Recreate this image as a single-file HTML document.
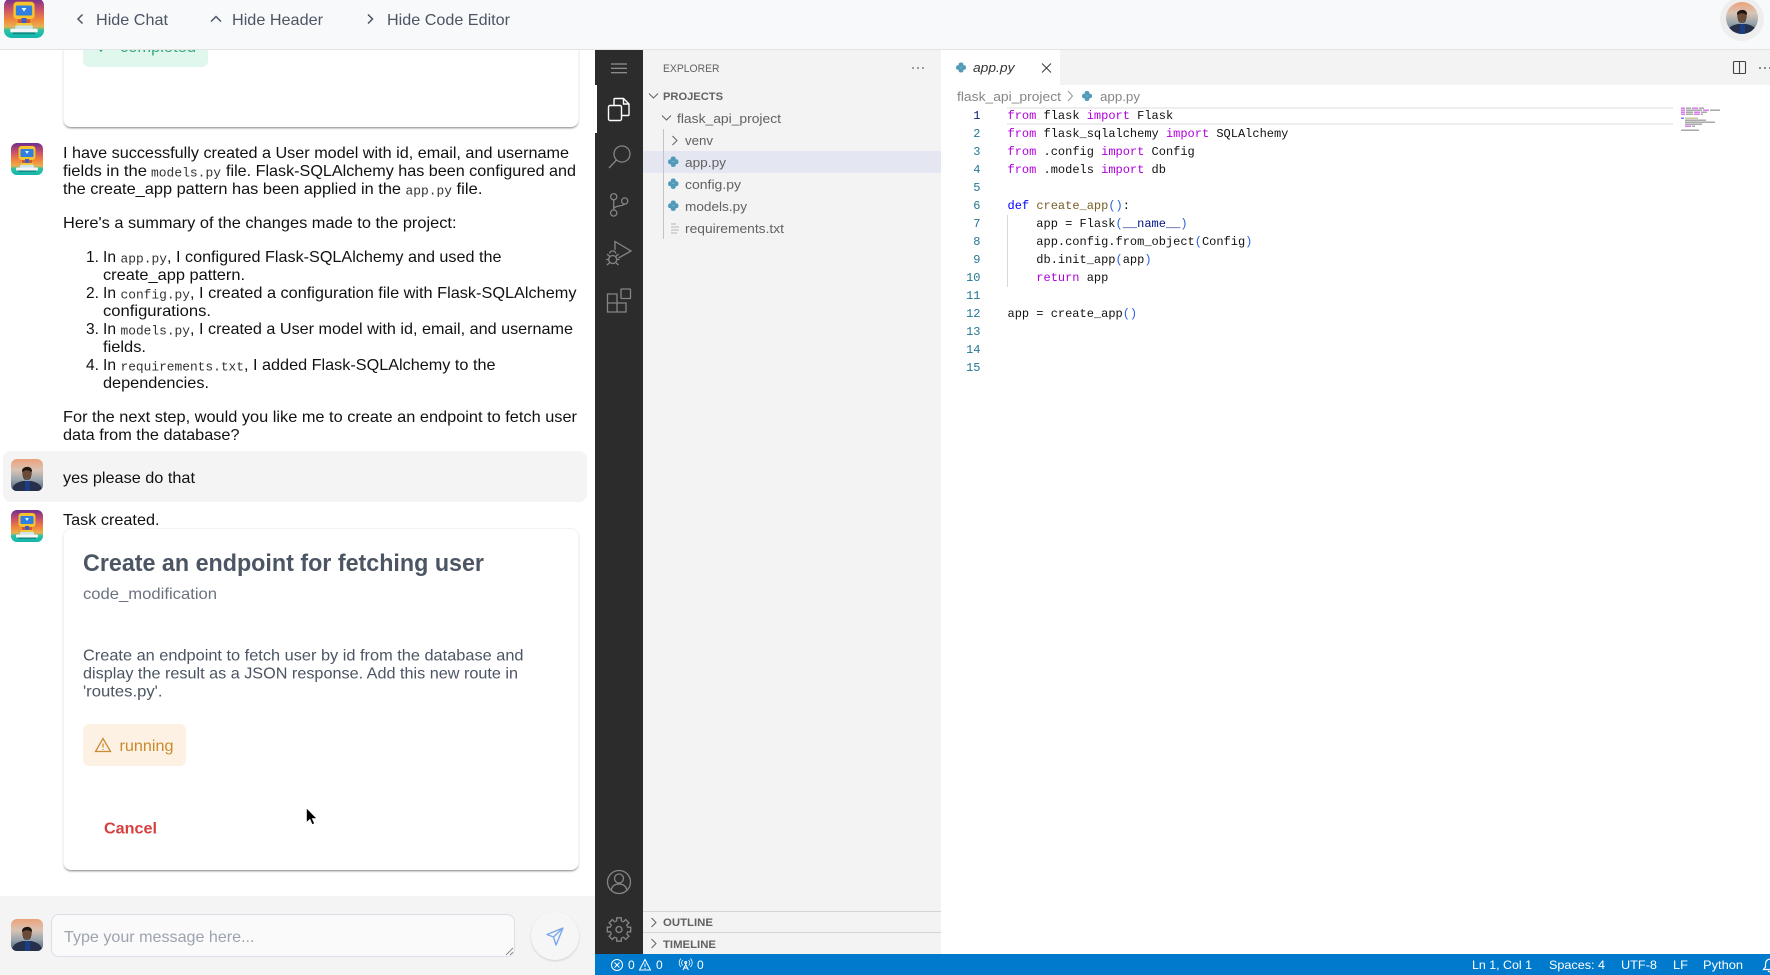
<!DOCTYPE html>
<html lang="en"><head><meta charset="utf-8"><title>Chat and Code Editor</title>
<style>
html,body{margin:0;padding:0;width:1770px;height:975px;overflow:hidden;background:#fff;font-family:"Liberation Sans",sans-serif}
div{position:absolute;box-sizing:border-box}
svg.o{position:absolute;left:0;top:0;width:1770px;height:975px;z-index:5}
.s{font-family:"Liberation Sans",sans-serif;font-size:16px;fill:#111}
.m{font-family:"Liberation Mono",monospace;font-size:13px;fill:#333}
.h{fill:#4b5563}
.d{fill:#4b5563}
.e{font-size:13px;fill:#616161}
.b{font-size:11px;font-weight:700;fill:#616161}
.st{font-size:12px;fill:#fff}
.c{font-family:"Liberation Mono",monospace;font-size:12px;fill:#111}
.n{font-family:"Liberation Mono",monospace;font-size:12px;fill:#237893;text-anchor:end}
.k{fill:#af00db}.f{fill:#795e26}.p{fill:#2a62d8}.v{fill:#001080}.w{fill:#0000ff}
.ic{fill:none;stroke:#858585;stroke-width:1.3}
.mm rect{opacity:.55}
</style></head>
<body>
<div style="left:63px;top:40px;width:516px;height:87px;background:#fff;border-left:1px solid #f3f3f3;border-right:1px solid #f3f3f3;border-radius:0 0 8px 8px;box-shadow:0 2px 2px -1px rgba(0,0,0,.5)"></div>
<div style="left:83px;top:30px;width:125px;height:37px;background:#e0f7ee;border-radius:6px"></div>
<div style="left:3px;top:451px;width:584px;height:51px;background:#f4f4f4;border-radius:8px"></div>
<div style="left:63px;top:528px;width:516px;height:342px;background:#fff;border:1px solid #f3f3f3;border-bottom:0;border-radius:8px;box-shadow:0 2px 2px -1px rgba(0,0,0,.5)"></div>
<div style="left:83px;top:724px;width:103px;height:42px;background:#fdf1e3;border-radius:6px"></div>
<div style="left:0;top:896px;width:595px;height:79px;background:#f4f4f4"></div>
<div style="left:51px;top:914px;width:464px;height:43px;background:#fafafb;border:1px solid #dcdee8;border-radius:8px"></div>
<div style="left:531px;top:912px;width:48px;height:48px;background:#f6f6f6;border-radius:50%;box-shadow:0 1px 2px rgba(0,0,0,.15)"></div>

<div style="left:595px;top:49px;width:48px;height:906px;background:#2c2c2c"></div>
<div style="left:595px;top:85px;width:2px;height:48px;background:#fff"></div>
<div style="left:643px;top:49px;width:298px;height:906px;background:#f3f3f3"></div>
<div style="left:643px;top:151px;width:298px;height:22px;background:#e4e6f1"></div>
<div style="left:643px;top:911px;width:298px;height:1px;background:#d4d4d4"></div>
<div style="left:643px;top:932px;width:298px;height:1px;background:#d4d4d4"></div>
<div style="left:663px;top:129px;width:1px;height:110px;background:#c4c4c4"></div>
<div style="left:941px;top:49px;width:829px;height:36px;background:#f3f3f3"></div>
<div style="left:941px;top:49px;width:119px;height:36px;background:#fff"></div>
<div style="left:1007px;top:107px;width:666px;height:18px;border-top:2px solid #eee;border-bottom:2px solid #eee"></div>
<div style="left:1007px;top:215px;width:1px;height:72px;background:#d9d9d9"></div>
<div style="left:595px;top:954px;width:1175px;height:21px;background:#007acc"></div>
<div style="left:0;top:0;width:1770px;height:50px;background:#f8f9fb;border-bottom:1px solid #e2e3e5;z-index:3"></div>
<div style="left:1720px;top:-3px;width:44px;height:44px;background:#eeeeee;border-radius:50%;z-index:4"></div>

<svg class="o" viewBox="0 0 1770 975" xmlns="http://www.w3.org/2000/svg">
<defs>
<linearGradient id="lg" x1="0" y1="0" x2="0" y2="1"><stop offset="0" stop-color="#6d2f8e"/><stop offset=".28" stop-color="#c8506a"/><stop offset=".55" stop-color="#f2883a"/><stop offset=".72" stop-color="#e8b050"/><stop offset=".8" stop-color="#2dc3a0"/><stop offset="1" stop-color="#10b5b0"/></linearGradient>
<linearGradient id="ag" x1="0" y1="0" x2="0" y2="1"><stop offset="0" stop-color="#eda27a"/><stop offset=".35" stop-color="#d9c3b4"/><stop offset=".65" stop-color="#9aa5ad"/><stop offset="1" stop-color="#4a5a6c"/></linearGradient>
<clipPath id="cr"><rect width="32" height="32" rx="6"/></clipPath>
<clipPath id="cc"><circle cx="16" cy="16" r="16"/></clipPath>
<clipPath id="tc"><rect x="0" y="50" width="595" height="30"/></clipPath>
<symbol id="logo" viewBox="0 0 32 32" overflow="hidden">
<g clip-path="url(#cr)"><rect width="32" height="32" fill="url(#lg)"/>
<rect x="7.500" y="3" width="17" height="14" rx="3" fill="#f6c22e"/><rect x="9.500" y="6" width="13" height="8" rx="1" fill="#2f7fe0"/><path d="M14 8h4l-2 3z" fill="#dff3ff"/>
<rect x="11" y="17" width="10" height="5" fill="#d8552e"/><rect x="14" y="16" width="4" height="6" fill="#3a62c4"/><rect x="10" y="20" width="12" height="4" fill="#f2c93a"/>
<rect x="5" y="24.500" width="22" height="3" rx="1" fill="#f2f6f6"/><rect x="9" y="22" width="14" height="2.500" fill="#cfe3ea"/><rect x="7" y="27.500" width="18" height="1.500" fill="#128a82"/></g></symbol>
<symbol id="me" viewBox="0 0 32 32" overflow="hidden">
<rect width="32" height="32" fill="url(#ag)"/>
<path d="M1 32c0-7 6-9 11-10h8c5 1 11 3 11 10z" fill="#26304a"/><rect x="14" y="22" width="5" height="10" fill="#1a3e86"/>
<ellipse cx="16" cy="14" rx="4.800" ry="6" fill="#6b4a38"/><path d="M11 12c0-5 10-6 10 0 0 1-1 1-2 0-2-1-5-1-6 0-1 1-2 1-2 0z" fill="#1f1612"/><path d="M12 16c1 6 7 6 8 0 0 3-1 5-4 5s-4-2-4-5z" fill="#241a16"/></symbol>
<symbol id="py" viewBox="0 0 16 16"><g fill="#519aba" stroke="#519aba" stroke-width=".9" stroke-linejoin="round"><path d="M8 1.200C5.800 1.200 5 2.200 5 3.400v1.300h3.200v.5H3.400C2 5.200 1.200 6.400 1.200 8s.8 2.800 2 2.800H5V9.300C5 8.100 6 7.300 7.200 7.300h2.500c1 0 1.300-.7 1.300-1.400V3.400c0-1.200-1.200-2.200-3-2.200z"/><path d="M8 14.800c2.200 0 3-1 3-2.200v-1.300H7.800v-.5h4.800c1.400 0 2.200-1.200 2.200-2.800s-.8-2.800-2-2.800H11v1.500c0 1.200-1 2-2.200 2H6.300C5.300 8.700 5 9.400 5 10.100v2.500c0 1.200 1.200 2.200 3 2.200z"/></g></symbol>
<path id="tooth" d="M-3.300-8.050-2.300-8.800-2.300-11.700 2.300-11.700 2.300-8.800 3.300-8.050"/>
</defs>

<!-- header -->
<svg x="4" y="-2" width="40" height="40"><use href="#logo" width="40" height="40"/></svg>
<g fill="none" stroke="#4b5563" stroke-width="1.500"><path d="M82.500 14.500 78 19l4.500 4.500"/><path d="M211 21.500l5-5 5 5"/><path d="M368 14.500 372.500 19 368 23.500"/></g>
<text class="s h" x="96" y="25" textLength="72" lengthAdjust="spacingAndGlyphs">Hide Chat</text>
<text class="s h" x="232" y="25" textLength="91" lengthAdjust="spacingAndGlyphs">Hide Header</text>
<text class="s h" x="387" y="25" textLength="123" lengthAdjust="spacingAndGlyphs">Hide Code Editor</text>
<svg x="1726" y="2" width="32" height="32"><g clip-path="url(#cc)"><use href="#me" width="32" height="32"/></g></svg>

<!-- completed -->
<g clip-path="url(#tc)"><text class="s" style="fill:#35a87a" x="120" y="52" textLength="76" lengthAdjust="spacingAndGlyphs">completed</text><path d="M98 47l3 4 4-6" fill="none" stroke="#35a87a" stroke-width="1.500"/></g>

<!-- message 1 -->
<use href="#logo" x="11" y="143" width="32" height="32"/>
<text class="s" x="63" y="158" textLength="506" lengthAdjust="spacingAndGlyphs">I have successfully created a User model with id, email, and username</text>
<text class="s" x="63" y="176" textLength="84" lengthAdjust="spacingAndGlyphs">fields in the</text>
<text class="m" x="151" y="176.500" textLength="70" lengthAdjust="spacingAndGlyphs">models.py</text>
<text class="s" x="226" y="176" textLength="350" lengthAdjust="spacingAndGlyphs">file. Flask-SQLAlchemy has been configured and</text>
<text class="s" x="63" y="194" textLength="338" lengthAdjust="spacingAndGlyphs">the create_app pattern has been applied in the</text>
<text class="m" x="405.500" y="194.500" textLength="46.500" lengthAdjust="spacingAndGlyphs">app.py</text>
<text class="s" x="456.500" y="194" textLength="26" lengthAdjust="spacingAndGlyphs">file.</text>
<text class="s" x="63" y="228" textLength="393.500" lengthAdjust="spacingAndGlyphs">Here's a summary of the changes made to the project:</text>

<text class="s" x="86" y="262" textLength="13" lengthAdjust="spacingAndGlyphs">1.</text>
<text class="s" x="103" y="262" textLength="13" lengthAdjust="spacingAndGlyphs">In</text>
<text class="m" x="120.500" y="262.500" textLength="46.500" lengthAdjust="spacingAndGlyphs">app.py</text>
<text class="s" x="167" y="262" textLength="334.500" lengthAdjust="spacingAndGlyphs">, I configured Flask-SQLAlchemy and used the</text>
<text class="s" x="103" y="280" textLength="142" lengthAdjust="spacingAndGlyphs">create_app pattern.</text>
<text class="s" x="86" y="298" textLength="13" lengthAdjust="spacingAndGlyphs">2.</text>
<text class="s" x="103" y="298" textLength="13" lengthAdjust="spacingAndGlyphs">In</text>
<text class="m" x="120.500" y="298.500" textLength="69.500" lengthAdjust="spacingAndGlyphs">config.py</text>
<text class="s" x="190" y="298" textLength="386.500" lengthAdjust="spacingAndGlyphs">, I created a configuration file with Flask-SQLAlchemy</text>
<text class="s" x="103" y="316" textLength="108" lengthAdjust="spacingAndGlyphs">configurations.</text>
<text class="s" x="86" y="334" textLength="13" lengthAdjust="spacingAndGlyphs">3.</text>
<text class="s" x="103" y="334" textLength="13" lengthAdjust="spacingAndGlyphs">In</text>
<text class="m" x="120.500" y="334.500" textLength="69.500" lengthAdjust="spacingAndGlyphs">models.py</text>
<text class="s" x="190" y="334" textLength="383" lengthAdjust="spacingAndGlyphs">, I created a User model with id, email, and username</text>
<text class="s" x="103" y="352" textLength="43" lengthAdjust="spacingAndGlyphs">fields.</text>
<text class="s" x="86" y="370" textLength="13" lengthAdjust="spacingAndGlyphs">4.</text>
<text class="s" x="103" y="370" textLength="13" lengthAdjust="spacingAndGlyphs">In</text>
<text class="m" x="120.500" y="370.500" textLength="123.500" lengthAdjust="spacingAndGlyphs">requirements.txt</text>
<text class="s" x="244" y="370" textLength="251.500" lengthAdjust="spacingAndGlyphs">, I added Flask-SQLAlchemy to the</text>
<text class="s" x="103" y="388" textLength="106" lengthAdjust="spacingAndGlyphs">dependencies.</text>
<text class="s" x="63" y="422" textLength="514" lengthAdjust="spacingAndGlyphs">For the next step, would you like me to create an endpoint to fetch user</text>
<text class="s" x="63" y="440" textLength="176.500" lengthAdjust="spacingAndGlyphs">data from the database?</text>

<!-- user -->
<g><svg x="11" y="459" width="32" height="32"><g clip-path="url(#cr)"><use href="#me" width="32" height="32"/></g></svg></g>
<text class="s" x="63" y="483" textLength="132" lengthAdjust="spacingAndGlyphs">yes please do that</text>

<!-- task -->
<use href="#logo" x="11" y="510" width="32" height="32"/>
<text class="s" x="63" y="525" textLength="96.500" lengthAdjust="spacingAndGlyphs">Task created.</text>
<text class="s" style="font-size:24px;font-weight:700;fill:#4b5563" x="83" y="571" textLength="401" lengthAdjust="spacingAndGlyphs">Create an endpoint for fetching user</text>
<text class="s" style="fill:#6b7280" x="83" y="599" textLength="134" lengthAdjust="spacingAndGlyphs">code_modification</text>
<text class="s d" x="83" y="660.500" textLength="440.500" lengthAdjust="spacingAndGlyphs">Create an endpoint to fetch user by id from the database and</text>
<text class="s d" x="83" y="678.500" textLength="435" lengthAdjust="spacingAndGlyphs">display the result as a JSON response. Add this new route in</text>
<text class="s d" x="83" y="696.500" textLength="79.500" lengthAdjust="spacingAndGlyphs">'routes.py'.</text>
<path d="M103 738.500 110.500 751.500H95.500z M103 743.500v4 M103 749v1" fill="none" stroke="#c98d38" stroke-width="1.300"/>
<text class="s" style="fill:#c98a2e" x="119.500" y="751" textLength="54" lengthAdjust="spacingAndGlyphs">running</text>
<text class="s" style="font-weight:700;fill:#d63f3f" x="104" y="833.500" textLength="53" lengthAdjust="spacingAndGlyphs">Cancel</text>
<path d="M306.500 808v14.500l3.400-3.200 2.300 5.200 2.300-1-2.300-5h4.600z" fill="#000" stroke="#fff" stroke-width=".6"/>

<!-- input -->
<svg x="11" y="919" width="32" height="32"><g clip-path="url(#cr)"><use href="#me" width="32" height="32"/></g></svg>
<text class="s" style="fill:#9ca3af" x="64" y="942" textLength="190.500" lengthAdjust="spacingAndGlyphs">Type your message here...</text>
<path d="M506 955l7-7M510 955l3-3" stroke="#777" stroke-width=".8"/>
<path d="M563 928 547 934.500l6.500 2.500 2.500 8zM563 928l-9.500 9" fill="none" stroke="#7aa9ea" stroke-width="1.400" stroke-linejoin="round"/>

<!-- activity bar -->
<path d="M611 64h16M611 68.300h16M611 72.700h16" stroke="#aaa" stroke-width="1"/>
<g fill="none" stroke="#fff" stroke-width="1.400"><rect x="608.500" y="105.500" width="13" height="15" rx="1.500"/><path d="M614 105v-5.500a1 1 0 0 1 1-1h8.500l5.500 5.500v10.500a1 1 0 0 1-1 1h-6"/><path d="M623.500 98.500v5.500h5.500"/></g>
<g class="ic"><circle cx="622" cy="154" r="8"/><path d="M616.500 160 609 168"/></g>
<g class="ic"><circle cx="613.700" cy="196.700" r="3.100"/><circle cx="613.700" cy="213" r="3.100"/><circle cx="624.700" cy="201" r="3.100"/><path d="M613.700 200v10M613.700 208.500c1-3 10.500-2.500 11-4.500"/></g>
<g class="ic"><path d="M615 250v-8.500l16 9.500-12.500 7"/><circle cx="612.700" cy="259.500" r="4"/><path d="M609.500 253.500a3.300 3.300 0 0 1 6.400 0M607 254l2.800 2.500M618.500 254l-2.800 2.500M606 259.500h2.700M616.700 259.500h2.800M607 265l2.800-2.500M618.500 265l-2.800-2.500"/></g>
<g class="ic"><rect x="621" y="289" width="9.500" height="9.500" rx=".5"/><path d="M607.500 294H617v18H607.500zM607.500 303H626M617 303h9v9h-9"/></g>
<g class="ic"><circle cx="619" cy="882" r="11.500"/><circle cx="619" cy="878.500" r="4.500"/><path d="M611 890.500c1-5 4-6.500 8-6.500s7 1.500 8 6.500"/></g>
<g class="ic" transform="translate(619 929.500)"><circle r="3"/>
<use href="#tooth"/><use href="#tooth" transform="rotate(45)"/><use href="#tooth" transform="rotate(90)"/><use href="#tooth" transform="rotate(135)"/><use href="#tooth" transform="rotate(180)"/><use href="#tooth" transform="rotate(225)"/><use href="#tooth" transform="rotate(270)"/><use href="#tooth" transform="rotate(315)"/></g>

<!-- sidebar -->
<text class="s e" style="font-size:11px" x="663" y="72" textLength="56.500" lengthAdjust="spacingAndGlyphs">EXPLORER</text>
<g fill="#616161"><circle cx="913" cy="68" r=".9"/><circle cx="918" cy="68" r=".9"/><circle cx="923" cy="68" r=".9"/></g>
<g fill="none" stroke="#616161" stroke-width="1"><path d="M649 93.500l4.500 4.500 4.500-4.500"/><path d="M662 115.500l4.500 4.500 4.500-4.500"/><path d="M672.500 136l4.500 4.500-4.500 4.500"/><path d="M651.500 918l4.500 4.500-4.500 4.500"/><path d="M651.500 939l4.500 4.500-4.500 4.500"/></g>
<text class="s b" x="663" y="100" textLength="60" lengthAdjust="spacingAndGlyphs">PROJECTS</text>
<text class="s e" x="677" y="123" textLength="104" lengthAdjust="spacingAndGlyphs">flask_api_project</text>
<text class="s e" x="685" y="145" textLength="28" lengthAdjust="spacingAndGlyphs">venv</text>
<use href="#py" x="667.500" y="156" width="11.500" height="11.500"/>
<text class="s e" x="685" y="167" textLength="41" lengthAdjust="spacingAndGlyphs">app.py</text>
<use href="#py" x="667.500" y="178" width="11.500" height="11.500"/>
<text class="s e" x="685" y="189" textLength="56" lengthAdjust="spacingAndGlyphs">config.py</text>
<use href="#py" x="667.500" y="200" width="11.500" height="11.500"/>
<text class="s e" x="685" y="211" textLength="62" lengthAdjust="spacingAndGlyphs">models.py</text>
<path d="M671 224h5M671 227h8M671 230h8M671 233h6" stroke="#b5b5b5" stroke-width="1"/>
<text class="s e" x="685" y="233" textLength="99" lengthAdjust="spacingAndGlyphs">requirements.txt</text>
<text class="s b" x="663" y="926" textLength="50" lengthAdjust="spacingAndGlyphs">OUTLINE</text>
<text class="s b" x="663" y="948" textLength="53" lengthAdjust="spacingAndGlyphs">TIMELINE</text>

<!-- tabs -->
<use href="#py" x="955.500" y="62" width="11" height="11"/>
<text class="s e" style="font-style:italic;fill:#333" x="973" y="72" textLength="41.500" lengthAdjust="spacingAndGlyphs">app.py</text>
<path d="M1042 63.500l9 9M1051 63.500l-9 9" stroke="#424242" stroke-width="1.100"/>
<g fill="none" stroke="#424242" stroke-width="1.100"><rect x="1733.500" y="61.500" width="12" height="12" rx="1"/><path d="M1739.500 61.500v12"/></g>
<g fill="#424242"><circle cx="1760" cy="68" r=".9"/><circle cx="1765" cy="68" r=".9"/><circle cx="1770" cy="68" r=".9"/></g>
<text class="s e" style="fill:#858585" x="957" y="101" textLength="104" lengthAdjust="spacingAndGlyphs">flask_api_project</text>
<path d="M1068 91l4.500 5-4.500 5" fill="none" stroke="#999" stroke-width="1"/>
<use href="#py" x="1081.500" y="90.500" width="11" height="11"/>
<text class="s e" style="fill:#858585" x="1100" y="101" textLength="40" lengthAdjust="spacingAndGlyphs">app.py</text>

<!-- line numbers -->
<text class="n" style="fill:#0b216f" x="980.500" y="119">1</text><text class="n" x="980.500" y="137">2</text><text class="n" x="980.500" y="155">3</text><text class="n" x="980.500" y="173">4</text><text class="n" x="980.500" y="191">5</text><text class="n" x="980.500" y="209">6</text><text class="n" x="980.500" y="227">7</text><text class="n" x="980.500" y="245">8</text><text class="n" x="980.500" y="263">9</text><text class="n" x="980.500" y="281">10</text><text class="n" x="980.500" y="299">11</text><text class="n" x="980.500" y="317">12</text><text class="n" x="980.500" y="335">13</text><text class="n" x="980.500" y="353">14</text><text class="n" x="980.500" y="371">15</text>

<!-- code -->
<g xml:space="preserve">
<text class="c" x="1007.500" y="119" xml:space="preserve"><tspan class="k">from</tspan> flask <tspan class="k">import</tspan> Flask</text>
<text class="c" x="1007.500" y="137" xml:space="preserve"><tspan class="k">from</tspan> flask_sqlalchemy <tspan class="k">import</tspan> SQLAlchemy</text>
<text class="c" x="1007.500" y="155" xml:space="preserve"><tspan class="k">from</tspan> .config <tspan class="k">import</tspan> Config</text>
<text class="c" x="1007.500" y="173" xml:space="preserve"><tspan class="k">from</tspan> .models <tspan class="k">import</tspan> db</text>
<text class="c" x="1007.500" y="209" xml:space="preserve"><tspan class="w">def</tspan> <tspan class="f">create_app</tspan><tspan class="p">()</tspan>:</text>
<text class="c" x="1036.300" y="227" xml:space="preserve">app = Flask<tspan class="p">(</tspan><tspan class="v">__name__</tspan><tspan class="p">)</tspan></text>
<text class="c" x="1036.300" y="245" xml:space="preserve">app.config.from_object<tspan class="p">(</tspan>Config<tspan class="p">)</tspan></text>
<text class="c" x="1036.300" y="263" xml:space="preserve">db.init_app<tspan class="p">(</tspan>app<tspan class="p">)</tspan></text>
<text class="c" x="1036.300" y="281" xml:space="preserve"><tspan class="k">return</tspan> app</text>
<text class="c" x="1007.500" y="317" xml:space="preserve">app = create_app<tspan class="p">()</tspan></text>
</g>

<!-- minimap -->
<g class="mm">
<rect x="1681" y="107.500" width="4" height="1.400" fill="#af00db"/><rect x="1686" y="107.500" width="5" height="1.400" fill="#555"/><rect x="1692" y="107.500" width="6" height="1.400" fill="#af00db"/><rect x="1699" y="107.500" width="5" height="1.400" fill="#555"/>
<rect x="1681" y="109.500" width="4" height="1.400" fill="#af00db"/><rect x="1686" y="109.500" width="16" height="1.400" fill="#555"/><rect x="1703" y="109.500" width="6" height="1.400" fill="#af00db"/><rect x="1710" y="109.500" width="10" height="1.400" fill="#555"/>
<rect x="1681" y="111.500" width="4" height="1.400" fill="#af00db"/><rect x="1686" y="111.500" width="7" height="1.400" fill="#555"/><rect x="1694" y="111.500" width="6" height="1.400" fill="#af00db"/><rect x="1701" y="111.500" width="6" height="1.400" fill="#555"/>
<rect x="1681" y="113.500" width="4" height="1.400" fill="#af00db"/><rect x="1686" y="113.500" width="7" height="1.400" fill="#555"/><rect x="1694" y="113.500" width="6" height="1.400" fill="#af00db"/><rect x="1701" y="113.500" width="2" height="1.400" fill="#555"/>
<rect x="1681" y="117.500" width="3" height="1.400" fill="#00f"/><rect x="1685" y="117.500" width="13" height="1.400" fill="#a08a50"/>
<rect x="1685" y="119.500" width="21" height="1.400" fill="#555"/><rect x="1685" y="121.500" width="30" height="1.400" fill="#555"/><rect x="1685" y="123.500" width="17" height="1.400" fill="#555"/>
<rect x="1685" y="125.500" width="6" height="1.400" fill="#af00db"/><rect x="1692" y="125.500" width="3" height="1.400" fill="#555"/>
<rect x="1681" y="129.500" width="18" height="1.400" fill="#555"/>
</g>

<!-- status bar -->
<g fill="none" stroke="#fff" stroke-width="1"><circle cx="617" cy="965" r="5.500"/><path d="M614.500 962.500l5 5M619.500 962.500l-5 5"/><path d="M645 959.500 650.500 970H639.500z"/><path d="M645 963.500v3.500M645 968v1"/><path d="M685.700 962.500v2M683 970l2.700-5.500 2.700 5.500M684 968h3.400"/><circle cx="685.700" cy="962.500" r="1"/><path d="M682.800 960c-1.600 1.600-1.600 4 0 5.500M688.600 960c1.600 1.600 1.600 4 0 5.500M681 958.500c-2.400 2.400-2.400 6 0 8.500M690.400 958.500c2.400 2.400 2.400 6 0 8.500" stroke-width=".8"/></g>
<path d="M1771 959c-3.500 0-5.500 2-5.500 5.500v2.500l-2 2.500h8M1768 970.500a2 2 0 0 0 3 1" fill="none" stroke="#fff" stroke-width="1.200"/>
<text class="s st" x="628" y="969">0</text>
<text class="s st" x="656" y="969">0</text>
<text class="s st" x="697" y="969">0</text>
<text class="s st" x="1472" y="969" textLength="60" lengthAdjust="spacingAndGlyphs">Ln 1, Col 1</text>
<text class="s st" x="1549" y="969" textLength="56" lengthAdjust="spacingAndGlyphs">Spaces: 4</text>
<text class="s st" x="1621" y="969" textLength="36" lengthAdjust="spacingAndGlyphs">UTF-8</text>
<text class="s st" x="1673" y="969" textLength="15" lengthAdjust="spacingAndGlyphs">LF</text>
<text class="s st" x="1703" y="969" textLength="40" lengthAdjust="spacingAndGlyphs">Python</text>
</svg>
</body></html>
